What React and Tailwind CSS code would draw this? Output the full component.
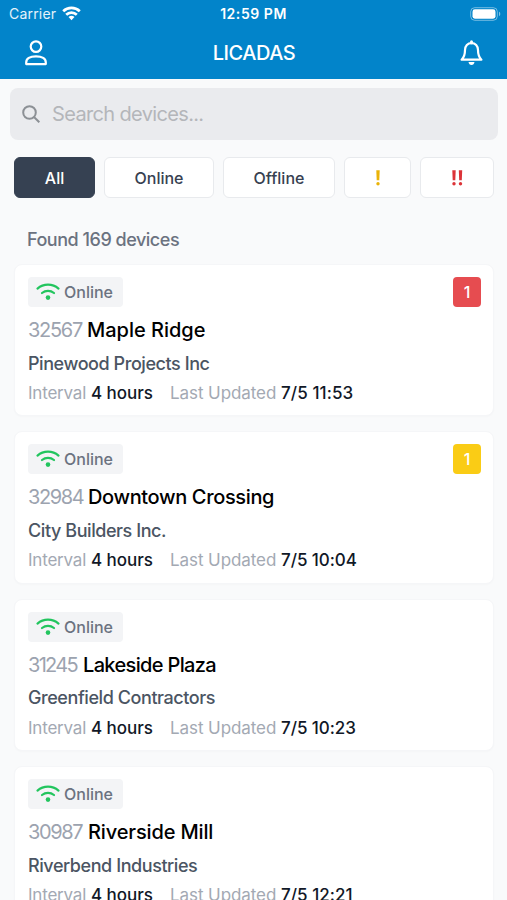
import React from 'react';

const devices = [
  { id: '32567', name: 'Maple Ridge', company: 'Pinewood Projects Inc', updated: '7/5 11:53', badge: 'bg-[#e64c50]', idSpacing: 'w-[59px] tracking-[-1.3px]', spacing: 'tracking-[-0.02px]', dateSpacing: 'tracking-[0.1px]' },
  { id: '32984', name: 'Downtown Crossing', company: 'City Builders Inc.', updated: '7/5 10:04', badge: 'bg-[#facc15]', idSpacing: 'w-[60px] tracking-[-1.4px]', spacing: 'tracking-[-0.36px]', dateSpacing: 'tracking-[-0.05px]' },
  { id: '31245', name: 'Lakeside Plaza', company: 'Greenfield Contractors', updated: '7/5 10:23', idSpacing: 'w-[55px] tracking-[-1.7px]', spacing: 'tracking-[-0.65px]', dateSpacing: 'tracking-[-0.05px]' },
  { id: '30987', name: 'Riverside Mill', company: 'Riverbend Industries', updated: '7/5 12:21', idSpacing: 'w-[60px] tracking-[-1.4px]', spacing: 'tracking-[-0.14px]', dateSpacing: 'tracking-[0.05px]' },
];

function StatusBar() {
  return (
    <div className="grid h-[27px] grid-cols-3 items-center pl-[9px] pr-[6px] text-[14px] leading-none text-white">
      <div className="flex items-center gap-[6px]">
        <span className="tracking-[0.2px] text-white/90">Carrier</span>
        <svg width="19" height="15" viewBox="0 0 19 15" fill="none" stroke="currentColor" strokeWidth="2.7">
          <path d="M1.2 5.3a12 12 0 0 1 16.6 0" />
          <path d="M4.2 8.7a7.6 7.6 0 0 1 10.6 0" />
          <path d="M6.5 11.1a4.4 4.4 0 0 1 6 0L9.5 14.3z" fill="currentColor" stroke="none" />
        </svg>
      </div>
      <span className="-ml-[3px] text-center font-semibold tracking-[0.55px] whitespace-nowrap">12:59 PM</span>
      <svg className="justify-self-end" width="31" height="14" viewBox="0 0 31 14" fill="none">
        <rect x="0.7" y="0.7" width="26.6" height="12.6" rx="4" stroke="white" strokeOpacity="0.45" />
        <rect x="2.5" y="2.3" width="23" height="9.4" rx="2.4" fill="white" />
        <path d="M29 4.8c1.7.6 1.7 3.8 0 4.4z" fill="white" fillOpacity="0.5" />
      </svg>
    </div>
  );
}

function Header() {
  return (
    <header className="h-[79px] shrink-0 bg-[#0284ca] text-white">
      <StatusBar />
      <div className="flex h-[52px] items-center justify-between pl-[24px] pr-[23px]">
        <svg width="24" height="26" viewBox="0 0 24 26" fill="none" stroke="currentColor" strokeWidth="2.2">
          <circle cx="12" cy="6.6" r="5.3" />
          <path d="M2.2 24.1v-1.6c0-3.7 3.6-6.2 9.8-6.2s9.8 2.5 9.8 6.2v1.6z" strokeLinejoin="round" />
        </svg>
        <h1 className="text-[20px] leading-none font-[450] tracking-[-0.5px]">LICADAS</h1>
        <svg width="24" height="26" viewBox="0 0 24 26" fill="none" stroke="currentColor" strokeWidth="2.2" strokeLinejoin="round">
          <path d="M11.500 3C7.700 3 5 6 5 10c0 5-.8 7.200-3.400 9.700h19.800C18.800 17.200 18 15 18 10c0-4-2.700-7-6.500-7z" />
          <path d="M11.500 1.800V3" strokeWidth="3" strokeLinecap="round" />
          <path d="M8.500 22.100h6c-.3 1.800-1.400 2.900-3 2.900s-2.700-1.100-3-2.900z" fill="currentColor" stroke="none" />
        </svg>
      </div>
    </header>
  );
}

function Filters() {
  const base = 'flex h-[41px] items-center justify-center rounded-[6px] border text-[16px] font-medium';
  const light = 'border-[#e8eaed] bg-white text-[#374151]';
  return (
    <div className="mt-[17px] flex gap-[9px] pl-[14px]">
      <button className={`${base} w-[81px] border-[#364152] bg-[#364152] text-white`}>All</button>
      <button className={`${base} ${light} w-[110px]`}>Online</button>
      <button className={`${base} ${light} w-[112px]`}>Offline</button>
      <button className={`${base} ${light} w-[67px]`}>
        <svg width="4" height="16" viewBox="0 0 4 16" fill="#eab308">
          <path d="M.3.3h3.400l-.4 10H.7z" />
          <circle cx="2" cy="13.800" r="1.700" />
        </svg>
      </button>
      <button className={`${base} ${light} w-[74px]`}>
        <svg width="11" height="16" viewBox="0 0 11 16" fill="#dc3338">
          <path d="M.3.3h3.400l-.4 10H.7zM6.800.3h3.400l-.4 10H7.200z" />
          <circle cx="2" cy="13.800" r="1.700" />
          <circle cx="8.500" cy="13.800" r="1.700" />
        </svg>
      </button>
    </div>
  );
}

function DeviceCard({ device }) {
  return (
    <div className="h-[152.400px] shrink-0 rounded-[8px] border border-[#f5f6f8] bg-white pl-[13px] pr-[12px] pt-[12px] shadow-[0_1px_2px_rgba(0,0,0,0.02)]">
      <div className="flex items-start justify-between">
        <div className="flex h-[30px] w-[95px] items-center gap-[4px] rounded-[4px] bg-[#f3f4f6] pl-[8px] text-[16px] font-[450] text-[#6b7280]">
          <svg width="24" height="18" viewBox="0 0 24 18" fill="none" stroke="#22c55e" strokeWidth="2.200" strokeLinecap="round">
            <path d="M1.500 5.600a16 16 0 0 1 21 0" />
            <path d="M6 10a9.500 9.500 0 0 1 12 0" />
            <circle cx="12" cy="14.600" r="2.300" fill="#22c55e" stroke="none" />
          </svg>
          <span>Online</span>
        </div>
        {device.badge && (
          <div className={`flex h-[30px] w-[28px] items-center justify-center rounded-[4px] text-[16px] font-medium text-white ${device.badge}`}>1</div>
        )}
      </div>
      <div className="mt-[10px] flex h-[26px] items-center text-[20px] whitespace-nowrap">
        <span className={`text-[#9ca3af] ${device.idSpacing}`}>{device.id}</span>
        <span className={`font-medium text-black ${device.spacing}`}>{device.name}</span>
      </div>
      <div className="mt-[7px] flex h-[26px] items-center text-[18px] font-[450] tracking-[-0.430px] text-[#4b5563]">{device.company}</div>
      <div className="mt-[4.500px] flex h-[26px] items-center text-[17px] whitespace-nowrap text-[#a3a9b3]">
        <span className="w-[63px] tracking-[-0.200px]">Interval</span>
        <span className="w-[79px] font-medium tracking-[-0.050px] text-[#111827]">4 hours</span>
        <span className="w-[111px] tracking-[-0.080px]">Last Updated</span>
        <span className={`font-medium text-[#111827] ${device.dateSpacing}`}>{device.updated}</span>
      </div>
    </div>
  );
}

export default function App() {
  return (
    <div className="flex h-[900px] w-[507px] flex-col overflow-hidden bg-[#f9fafb] font-['Inter','Liberation_Sans',sans-serif]">
      <Header />
      <main>
        <div className="mr-[9px] ml-[10px] mt-[9px] flex h-[52px] items-center gap-[12px] rounded-[8px] bg-[#eaebee] pl-[12px] text-[20px] tracking-[-0.650px] text-[#b4b6ba]">
          <svg width="18" height="18" viewBox="0 0 18 18" fill="none" stroke="#8c9095" strokeWidth="2">
            <circle cx="7.500" cy="7.500" r="6.300" />
            <path d="M12 12l5.300 5.300" />
          </svg>
          Search devices...
        </div>
        <Filters />
        <p className="mt-[29px] pl-[27px] text-[18px] leading-[26px] font-[450] tracking-[-0.480px] text-[#6b7280]">Found 169 devices</p>
        <div className="ml-[14px] mr-[13px] mt-[11px] flex flex-col gap-[15px]">
          {devices.map((device) => (
            <DeviceCard key={device.id} device={device} />
          ))}
        </div>
      </main>
    </div>
  );
}
